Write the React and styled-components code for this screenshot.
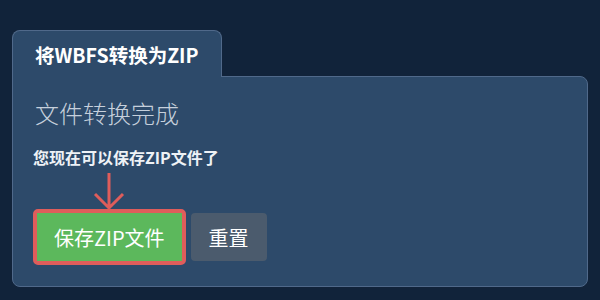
import React from 'react';
import styled, { createGlobalStyle } from 'styled-components';

const GlobalStyle = createGlobalStyle`
  html, body {
    margin: 0;
    padding: 0;
    background: #11233a;
    font-family: "Noto Sans CJK SC", "Noto Sans", sans-serif;
  }
`;

const Page = styled.div`
  width: 600px;
  height: 300px;
  box-sizing: border-box;
  padding: 30px 12px 0 12px;
`;

const Tab = styled.div`
  position: relative;
  z-index: 1;
  display: inline-flex;
  align-items: center;
  box-sizing: border-box;
  height: 47px;
  padding: 0 22px;
  margin-bottom: -1px;
  background: #2d4a6a;
  border: 1px solid #50698a;
  border-bottom: none;
  border-radius: 8px 8px 0 0;
  color: #ffffff;
  font-size: 19.5px;
  font-weight: 700;
`;

const Panel = styled.div`
  box-sizing: border-box;
  width: 576px;
  height: 211px;
  padding: 20px 22px 0 22px;
  background: #2d4a6a;
  border: 1px solid #50698a;
  border-radius: 0 8px 8px 8px;
`;

const Heading = styled.h2`
  margin: 0;
  font-size: 24px;
  line-height: 31px;
  font-weight: 300;
  color: #c6d0dc;
`;

const Note = styled.p`
  margin: 19px 0 0 -2px;
  font-size: 16px;
  line-height: 21px;
  font-weight: 700;
  color: #eef2f6;
`;

const Actions = styled.div`
  display: flex;
  align-items: center;
  gap: 5px;
  margin: 41px 0 0 -2px;
`;

const Highlight = styled.div`
  position: relative;
  border: 4px solid #df5d5b;
  border-radius: 5px;
  display: flex;
`;

const Arrow = styled.svg`
  position: absolute;
  left: 50%;
  bottom: 100%;
  margin-bottom: 2px;
  transform: translateX(-50%);
`;

const Button = styled.button`
  height: 48px;
  padding: 0 ${(p) => p.$pad}px;
  border: none;
  border-radius: ${(p) => p.$radius}px;
  background: ${(p) => p.$bg};
  color: #ffffff;
  font-family: inherit;
  font-size: 20px;
  cursor: pointer;
`;

export default function App() {
  return (
    <Page>
      <GlobalStyle />
      <Tab>将WBFS转换为ZIP</Tab>
      <Panel>
        <Heading>文件转换完成</Heading>
        <Note>您现在可以保存ZIP文件了</Note>
        <Actions>
          <Highlight>
            <Arrow width="32" height="38" viewBox="0 0 32 38">
              <path
                d="M16 0 V35 M2 21 L16 35 L30 21"
                fill="none"
                stroke="#df5d5b"
                strokeWidth="3"
              />
            </Arrow>
            <Button $bg="#5cb85c" $pad={17} $radius={0}>保存ZIP文件</Button>
          </Highlight>
          <Button $bg="#4b5b6d" $pad={18} $radius={4}>重置</Button>
        </Actions>
      </Panel>
    </Page>
  );
}
